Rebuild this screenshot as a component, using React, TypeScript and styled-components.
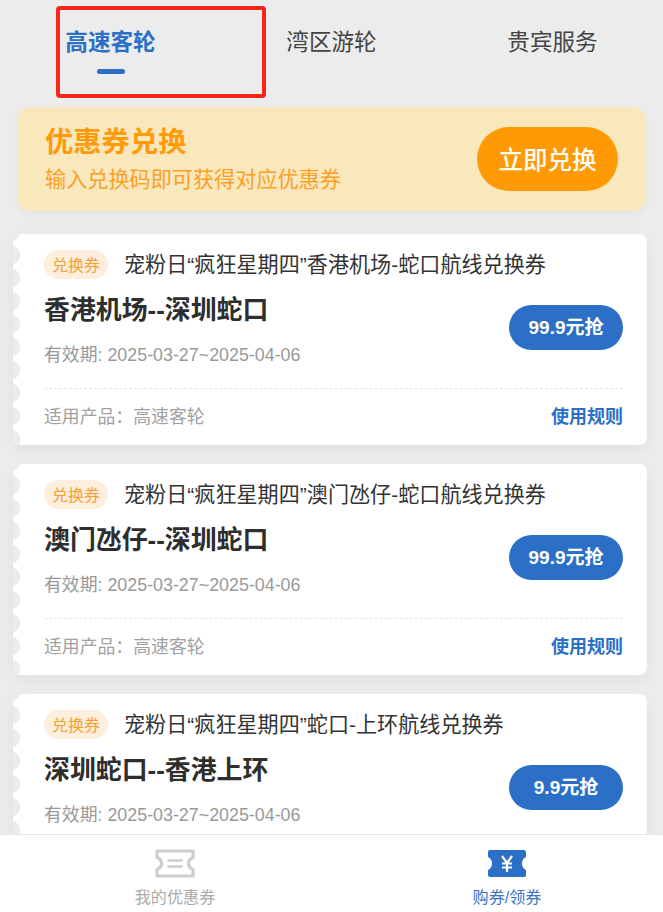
import React from "react";
import styled, { createGlobalStyle } from "styled-components";

const Global = createGlobalStyle`
  html, body { margin: 0; padding: 0; background: #ececec; }
  body { font-family: "Liberation Sans", "Noto Sans CJK SC", sans-serif; }
  * { box-sizing: border-box; }
`;

const Page = styled.div`
  width: 663px;
  height: 912px;
  display: flex;
  flex-direction: column;
  overflow: hidden;
  background: #ececec;
`;

const Main = styled.main`
  flex: 1;
  min-height: 0;
  overflow: hidden;
`;

const Tabs = styled.nav`
  display: grid;
  grid-template-columns: repeat(3, 221px);
  height: 107px;
`;

const Tab = styled.div<{ $active?: boolean }>`
  position: relative;
  display: flex;
  flex-direction: column;
  align-items: center;
  padding-top: 26px;
  font-size: 22.6px;
  line-height: 34px;
  font-weight: ${(p) => (p.$active ? 700 : 400)};
  color: ${(p) => (p.$active ? "#2b6fc7" : "#444")};
`;

const TabBar = styled.span`
  width: 28px;
  height: 5px;
  margin-top: 9px;
  border-radius: 3px;
  background: #2b6fc7;
`;

const Highlight = styled.span`
  position: absolute;
  left: 56px;
  top: 6px;
  width: 210px;
  height: 92px;
  border: 4px solid #f7251b;
  border-radius: 4px;
`;

const Banner = styled.section`
  display: flex;
  align-items: center;
  justify-content: space-between;
  height: 104px;
  margin: 0 18px 23px;
  padding: 0 27px;
  border-radius: 12px;
  background: #fae8bd;
  box-shadow: 0 3px 8px rgba(0, 0, 0, 0.04);
  color: #ff9a0a;
`;

const BannerText = styled.div`
  display: flex;
  flex-direction: column;
`;

const BannerTitle = styled.div`
  font-size: 28.3px;
  line-height: 38px;
  font-weight: 700;
`;

const BannerSub = styled.div`
  margin-top: 4px;
  font-size: 21.15px;
  line-height: 30px;
  color: #fb9f26;
`;

const RedeemButton = styled.div`
  display: flex;
  align-items: center;
  justify-content: center;
  width: 141px;
  height: 64px;
  padding-bottom: 2px;
  border-radius: 32px;
  background: #ff9a05;
  color: #fff;
  font-size: 24.5px;
  font-weight: 500;
`;

const Card = styled.article`
  position: relative;
  height: 211px;
  margin: 0 16px 19px 13px;
  padding: 16px 24px 0 31px;
  border-radius: 8px;
  background: #fff;
  box-shadow: 0 5px 14px rgba(0, 0, 0, 0.05);
  &::before {
    content: "";
    position: absolute;
    left: 0;
    top: 0;
    bottom: 0;
    width: 9px;
    background-image: radial-gradient(circle 9.5px at -2px 11.5px, #ececec 95%, transparent 100%);
    background-size: 9px 23px;
    background-position: 0 -13.5px;
    background-repeat: repeat-y;
  }
`;

const CardHead = styled.div`
  display: flex;
  align-items: flex-start;
  height: 29px;
`;

const Badge = styled.span`
  display: flex;
  align-items: center;
  justify-content: center;
  width: 64px;
  height: 29px;
  padding-bottom: 1px;
  border-radius: 15px;
  background: #fdeedd;
  color: #f6a033;
  font-size: 16px;
`;

const CardName = styled.span`
  margin-left: 16px;
  font-size: 21.1px;
  line-height: 30px;
  color: #333;
`;

const CardBody = styled.div`
  display: flex;
  align-items: center;
  justify-content: space-between;
  height: 78px;
  margin-top: 10px;
`;

const Route = styled.div`
  font-size: 25.9px;
  line-height: 42px;
  font-weight: 700;
  color: #2e2e2e;
`;

const Validity = styled.div`
  margin-top: 12px;
  font-size: 17.85px;
  line-height: 24px;
  color: #999;
`;

const BuyButton = styled.div`
  display: flex;
  align-items: center;
  justify-content: center;
  width: 114px;
  height: 45px;
  margin-top: -2px;
  padding-bottom: 3px;
  border-radius: 23px;
  background: #2b6fc7;
  color: #fff;
  font-size: 19px;
  font-weight: 700;
`;

const CardFoot = styled.div`
  display: flex;
  align-items: center;
  justify-content: space-between;
  height: 57px;
  margin-top: 21px;
  padding-bottom: 4px;
  border-top: 1px dashed #e4e4e4;
  font-size: 17.85px;
  color: #a0a0a0;
`;

const Rules = styled.span`
  font-size: 18px;
  font-weight: 700;
  color: #2b6fc7;
`;

const BottomNav = styled.nav`
  display: grid;
  grid-template-columns: 332px 322px;
  flex: none;
  height: 78px;
  padding-left: 9px;
  background: #fff;
  border-top: 1px solid #e6e6e6;
`;

const NavItem = styled.div<{ $active?: boolean }>`
  display: flex;
  flex-direction: column;
  align-items: center;
  padding-top: 14px;
  padding-left: ${(p) => (p.$active ? "10px" : "0")};
  color: ${(p) => (p.$active ? "#3a74c4" : "#aaa")};
`;

const NavLabel = styled.span`
  margin-top: 7px;
  font-size: 16.1px;
  line-height: 24px;
`;

const NavIcon = styled.svg`
  display: block;
  width: 40px;
  height: 29px;
`;

const coupons = [
  { name: "宠粉日“疯狂星期四”香港机场-蛇口航线兑换券", route: "香港机场--深圳蛇口", price: "99.9元抢" },
  { name: "宠粉日“疯狂星期四”澳门氹仔-蛇口航线兑换券", route: "澳门氹仔--深圳蛇口", price: "99.9元抢" },
  { name: "宠粉日“疯狂星期四”蛇口-上环航线兑换券", route: "深圳蛇口--香港上环", price: "9.9元抢" },
];

export default function App() {
  return (
    <Page>
      <Global />
      <Main>
        <Tabs>
          <Tab $active>
            高速客轮
            <TabBar />
            <Highlight />
          </Tab>
          <Tab>湾区游轮</Tab>
          <Tab>贵宾服务</Tab>
        </Tabs>
        <Banner>
          <BannerText>
            <BannerTitle>优惠券兑换</BannerTitle>
            <BannerSub>输入兑换码即可获得对应优惠券</BannerSub>
          </BannerText>
          <RedeemButton>立即兑换</RedeemButton>
        </Banner>
        {coupons.map((c) => (
          <Card key={c.route}>
            <CardHead>
              <Badge>兑换券</Badge>
              <CardName>{c.name}</CardName>
            </CardHead>
            <CardBody>
              <div>
                <Route>{c.route}</Route>
                <Validity>有效期: 2025-03-27~2025-04-06</Validity>
              </div>
              <BuyButton>{c.price}</BuyButton>
            </CardBody>
            <CardFoot>
              <span>适用产品：高速客轮</span>
              <Rules>使用规则</Rules>
            </CardFoot>
          </Card>
        ))}
      </Main>
      <BottomNav>
        <NavItem>
          <NavIcon viewBox="0 0 40 29" fill="none">
            <path
              d="M2 2H38V8.5C34.5 10 33.5 12 33.5 14.5C33.5 17 34.5 19 38 20.5V27H2V20.5C5.5 19 6.5 17 6.5 14.5C6.5 12 5.5 10 2 8.5Z"
              stroke="#cdcdcd"
              strokeWidth="3.2"
              strokeLinejoin="round"
            />
            <path d="M12.5 11.5H27.5M12.5 17.5H27.5" stroke="#cdcdcd" strokeWidth="2.6" />
          </NavIcon>
          <NavLabel>我的优惠券</NavLabel>
        </NavItem>
        <NavItem $active>
          <NavIcon viewBox="0 0 40 29">
            <path
              d="M3 1H37C38 1 39 2 39 3V8C36.5 9 35 11.5 35 14.5C35 17.5 36.5 20 39 21V26C39 27 38 28 37 28H3C2 28 1 27 1 26V21C3.5 20 5 17.5 5 14.5C5 11.5 3.5 9 1 8V3C1 2 2 1 3 1Z"
              fill="#2b6fc7"
            />
            <path
              d="M15 7L20 14L25 7M15 14.5H25M15 18.5H25M20 14V23"
              stroke="#fff"
              strokeWidth="2.2"
              fill="none"
            />
          </NavIcon>
          <NavLabel>购券/领券</NavLabel>
        </NavItem>
      </BottomNav>
    </Page>
  );
}
